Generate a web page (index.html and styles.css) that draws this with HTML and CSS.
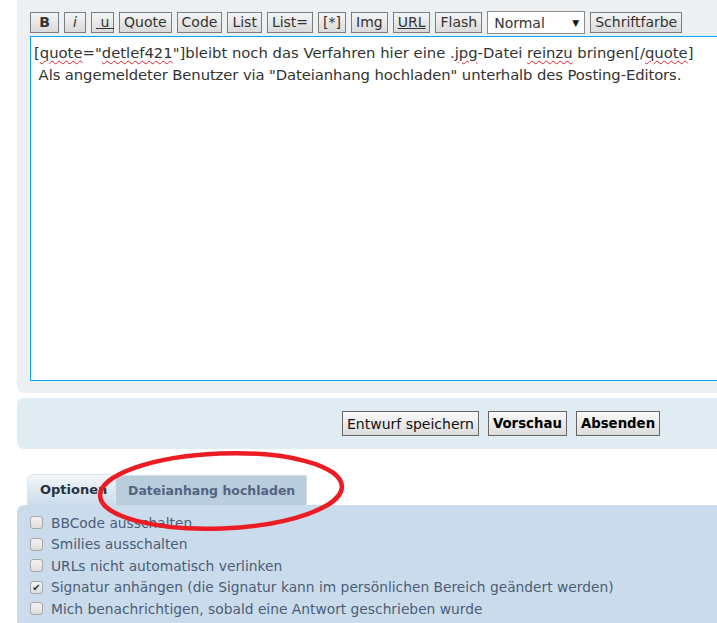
FILE: index.html
```html
<!DOCTYPE html>
<html>
<head>
    <meta charset="UTF-8">
    <title>Beitrag schreiben</title>
    <link rel="stylesheet" href="styles.css">
</head>
<body>
    <div class="page">
        <!-- Editor -->
        <div class="panel editor-panel">
            <div class="toolbar">
                <button class="tb-btn btn-b">B</button>
                <button class="tb-btn btn-i">i</button>
                <button class="tb-btn btn-u">&nbsp;u&nbsp;</button>
                <button class="tb-btn">Quote</button>
                <button class="tb-btn">Code</button>
                <button class="tb-btn">List</button>
                <button class="tb-btn">List=</button>
                <button class="tb-btn">[*]</button>
                <button class="tb-btn">Img</button>
                <button class="tb-btn btn-url">URL</button>
                <button class="tb-btn">Flash</button>
                <div class="size-select">
                    <span>Normal</span>
                    <span class="arrow">&#9660;</span>
                </div>
                <button class="tb-btn">Schriftfarbe</button>
            </div>
            <div class="message">
                <div>[<span class="typo">quote</span>="<span class="typo">detlef421</span>"]bleibt noch das Verfahren hier eine .<span class="typo">jpg</span>-Datei <span class="typo">reinzu</span> bringen[/<span class="typo">quote</span>]</div>
                <div class="second-line">&nbsp;Als angemeldeter Benutzer via "Dateianhang hochladen" unterhalb des Posting-Editors.</div>
            </div>
        </div>

        <!-- Submit buttons -->
        <div class="panel submit-panel">
            <button class="submit-btn">Entwurf speichern</button>
            <button class="submit-btn bold">Vorschau</button>
            <button class="submit-btn bold">Absenden</button>
        </div>

        <!-- Tabs -->
        <div class="tabs">
            <div class="tab active">Optionen</div>
            <div class="tab">Dateianhang hochladen</div>
        </div>

        <div class="options">
            <label class="option"><span class="check"></span>BBCode ausschalten</label>
            <label class="option"><span class="check"></span>Smilies ausschalten</label>
            <label class="option"><span class="check"></span>URLs nicht automatisch verlinken</label>
            <label class="option"><span class="check checked">&#10004;</span>Signatur anhängen (die Signatur kann im persönlichen Bereich geändert werden)</label>
            <label class="option"><span class="check"></span>Mich benachrichtigen, sobald eine Antwort geschrieben wurde</label>
        </div>

        <!-- red marker drawn over the tabs -->
        <svg class="marker" width="260" height="90" viewBox="0 0 260 90">
            <ellipse cx="125" cy="42" rx="121" ry="37.5" transform="rotate(-2.3 125 42)" fill="none" stroke="#ec1c24" stroke-width="4.5"/>
        </svg>
    </div>
</body>
</html>
```

FILE: styles.css
```css
body {
    margin: 0;
    background-color: #ffffff;
    font-family: "DejaVu Sans", Verdana, sans-serif;
    overflow: hidden;
}

.page {
    position: relative;
    margin-left: 17px;
    margin-right: -40px;
}

.panel {
    border-radius: 7px;
}

/* Editor panel */
.editor-panel {
    background-color: #ecf0f3;
    border-radius: 0 0 7px 7px;
    padding: 12px 0 12px 13px;
}

.toolbar {
    display: flex;
    align-items: center;
    gap: 5px;
    height: 21px;
    white-space: nowrap;
}

.tb-btn {
    font-family: "DejaVu Sans", Verdana, sans-serif;
    font-size: 14px;
    height: 21px;
    padding: 0 4px;
    margin: 0;
    border: 1px solid #7d7d7d;
    background: linear-gradient(#f5f5f5, #dadada);
    color: #333;
    line-height: 19px;
}

.btn-b {
    width: 29px;
    font-weight: bold;
}

.btn-i {
    width: 22px;
    font-style: italic;
}

.btn-u {
    width: 23px;
    text-decoration: underline;
}

.btn-url {
    text-decoration: underline;
}

.size-select {
    display: flex;
    justify-content: space-between;
    align-items: center;
    box-sizing: border-box;
    width: 98px;
    height: 23px;
    padding: 0 5px 0 6px;
    border: 1px solid #8c8c8c;
    background-color: #ffffff;
    font-size: 14px;
    color: #333;
}

.size-select .arrow {
    font-size: 9px;
    color: #111;
}

.message {
    box-sizing: border-box;
    height: 345px;
    margin-top: 3px;
    padding: 5px 3px;
    border: 1px solid #0aa6ee;
    border-right: none;
    background-color: #ffffff;
    font-size: 14.8px;
    line-height: 21.5px;
    color: #333;
    white-space: nowrap;
}

.second-line {
    letter-spacing: -0.1px;
}

.typo {
    text-decoration: underline wavy #e0202a;
    text-decoration-thickness: 1px;
    text-underline-offset: 2px;
}

/* Submit panel */
.submit-panel {
    margin-top: 5px;
    height: 51px;
    box-sizing: border-box;
    padding: 13px 0 0 325px;
    background-color: #e1ebf2;
    display: flex;
    gap: 9px;
    align-items: flex-start;
}

.submit-btn {
    font-family: "DejaVu Sans", Verdana, sans-serif;
    font-size: 14px;
    height: 25px;
    padding: 0 4px;
    margin: 0;
    border: 1px solid #666;
    background: linear-gradient(#fafafa, #dcdcdc);
    color: #111;
}

.submit-btn.bold {
    font-size: 13.3px;
    font-weight: bold;
    color: #000;
}

/* Tabs */
.tabs {
    display: flex;
    align-items: flex-end;
    margin-top: 25px;
    padding-left: 10px;
}

.tab {
    box-sizing: border-box;
    height: 30px;
    padding: 0 12px;
    font-size: 12.5px;
    font-weight: bold;
    line-height: 30px;
    white-space: nowrap;
    color: #536482;
    background-color: #b9cddc;
    border-top: 1px solid #d3dee8;
    border-right: 1px solid #d3dee8;
    border-radius: 2px 2px 0 0;
    width: 191px;
}

.tab.active {
    width: 89px;
    height: 31px;
    font-size: 13px;
    color: #28313f;
    background: linear-gradient(#f3f6f9, #cadceb);
    border: 1px solid #dde6ee;
    border-bottom: none;
    border-radius: 6px 6px 0 0;
}

.options {
    background-color: #cadceb;
    border-radius: 7px 0 0 0;
    padding: 7px 0 10px 13px;
    height: 120px;
}

.option {
    display: flex;
    align-items: center;
    height: 21.5px;
    font-size: 13.8px;
    color: #4c5d77;
    white-space: nowrap;
}

.check {
    box-sizing: border-box;
    flex-shrink: 0;
    width: 13px;
    height: 13px;
    margin-right: 8px;
    border: 1px solid #a7a7a7;
    border-radius: 3px;
    background: linear-gradient(#f4f4f4, #dedede);
    font-size: 10px;
    line-height: 11px;
    text-align: center;
    color: #333;
}

.marker {
    position: absolute;
    left: 79px;
    top: 449px;
}
```
